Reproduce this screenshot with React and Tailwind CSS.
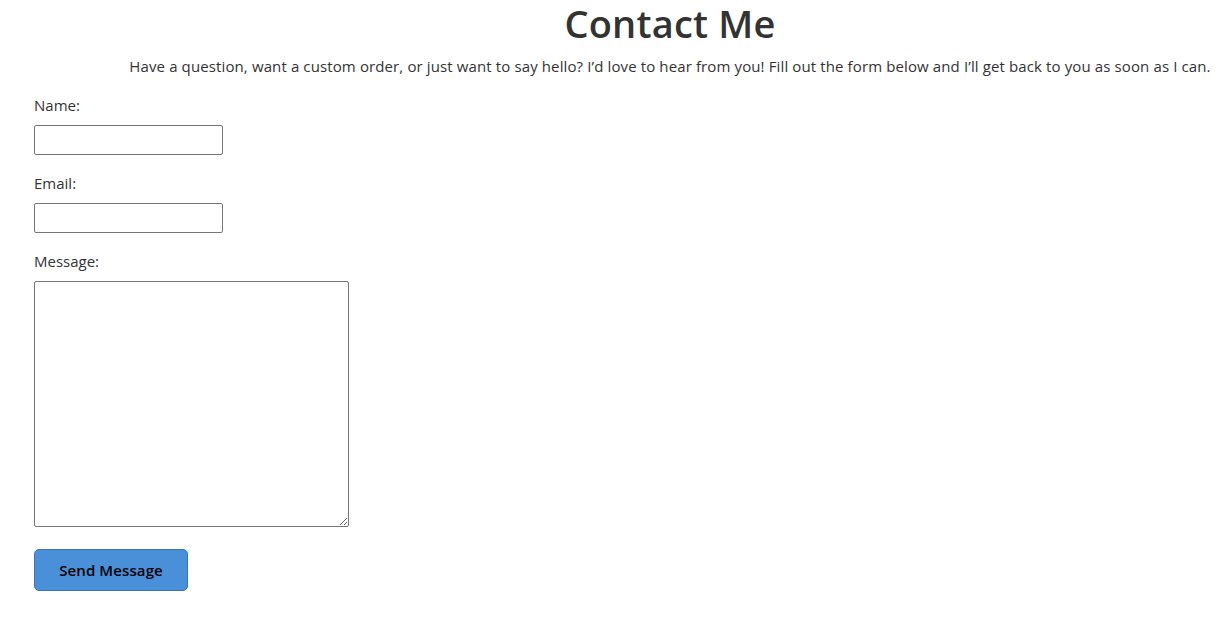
export default function App() {
  return (
    <div className="min-h-screen bg-white text-[#333] font-['Segoe_UI','Open_Sans',sans-serif]">
      <div className="ml-[121px] text-center">
        <h1 className="text-[38px] font-semibold leading-[48px] -mt-px tracking-[0.2px]">Contact Me</h1>
        <p className="mt-[7px] text-[15px] leading-[24px] tracking-[0.12px] whitespace-nowrap">
          Have a question, want a custom order, or just want to say hello? I’d love to hear from you! Fill out the form below and I’ll get back to you as soon as I can.
        </p>
      </div>

      <form className="px-[34px] pt-[15px] flex flex-col items-start" onSubmit={(e) => e.preventDefault()}>
        <label htmlFor="name" className="text-[15px] leading-[24px] mb-2">Name:</label>
        <input id="name" type="text" className="w-[189px] h-[30px] border border-[#767676] rounded-[2px] mb-4 px-1" />

        <label htmlFor="email" className="text-[15px] leading-[24px] mb-2">Email:</label>
        <input id="email" type="email" className="w-[189px] h-[30px] border border-[#767676] rounded-[2px] mb-4 px-1" />

        <label htmlFor="message" className="text-[15px] leading-[24px] mb-2">Message:</label>
        <textarea id="message" className="w-[315px] h-[246px] border border-[#767676] rounded-[2px] p-1" />

        <button
          type="submit"
          className="mt-[22px] w-[154px] h-[42px] bg-[#4a90d9] border border-[#3a74b8] rounded-[5px] text-black font-semibold text-[15px] tracking-[0.1px]"
        >
          Send Message
        </button>
      </form>
    </div>
  );
}
